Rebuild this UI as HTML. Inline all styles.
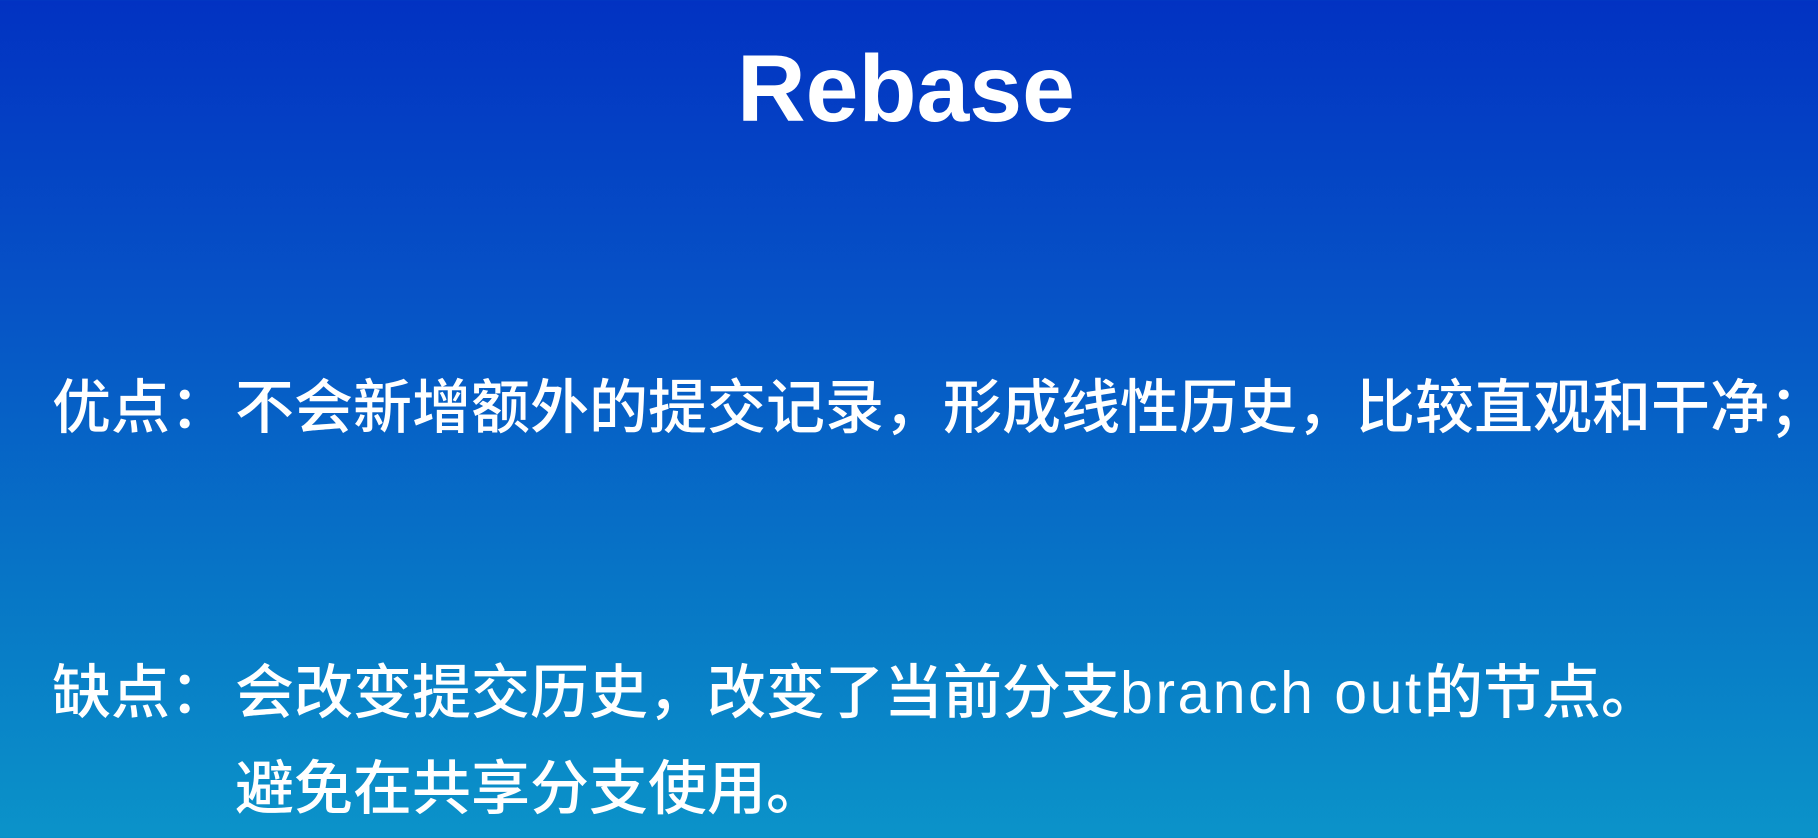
<!DOCTYPE html>
<html><head><meta charset="utf-8"><style>
html,body{margin:0;padding:0}
body{width:1818px;height:838px;overflow:hidden;position:relative;
background:linear-gradient(180deg,#0232c2 0%,#0652c6 35%,#0776c6 70%,#0b93c9 100%);
font-family:"Liberation Sans","Noto Sans CJK SC",sans-serif;color:#fff}
.t{position:absolute;white-space:nowrap;line-height:1}
#title{left:-3px;width:1818px;text-align:center;top:42px;font-size:95px;font-weight:bold;font-family:"Liberation Sans",sans-serif}
.b{font-size:59px;font-weight:500}
.lat{letter-spacing:2.5px}
</style></head><body>
<div class="t" id="title">Rebase</div>
<div class="t b" style="left:52px;top:379px">优点：</div>
<div class="t b" style="left:235px;top:379px">不会新增额外的提交记录，形成线性历史，比较直观和干净；</div>
<div class="t b" style="left:52px;top:664px">缺点：</div>
<div class="t b" style="left:235px;top:664px">会改变提交历史，改变了当前分支<span class="lat">branch out</span>的节点。</div>
<div class="t b" style="left:235px;top:760px">避免在共享分支使用。</div>
</body></html>
